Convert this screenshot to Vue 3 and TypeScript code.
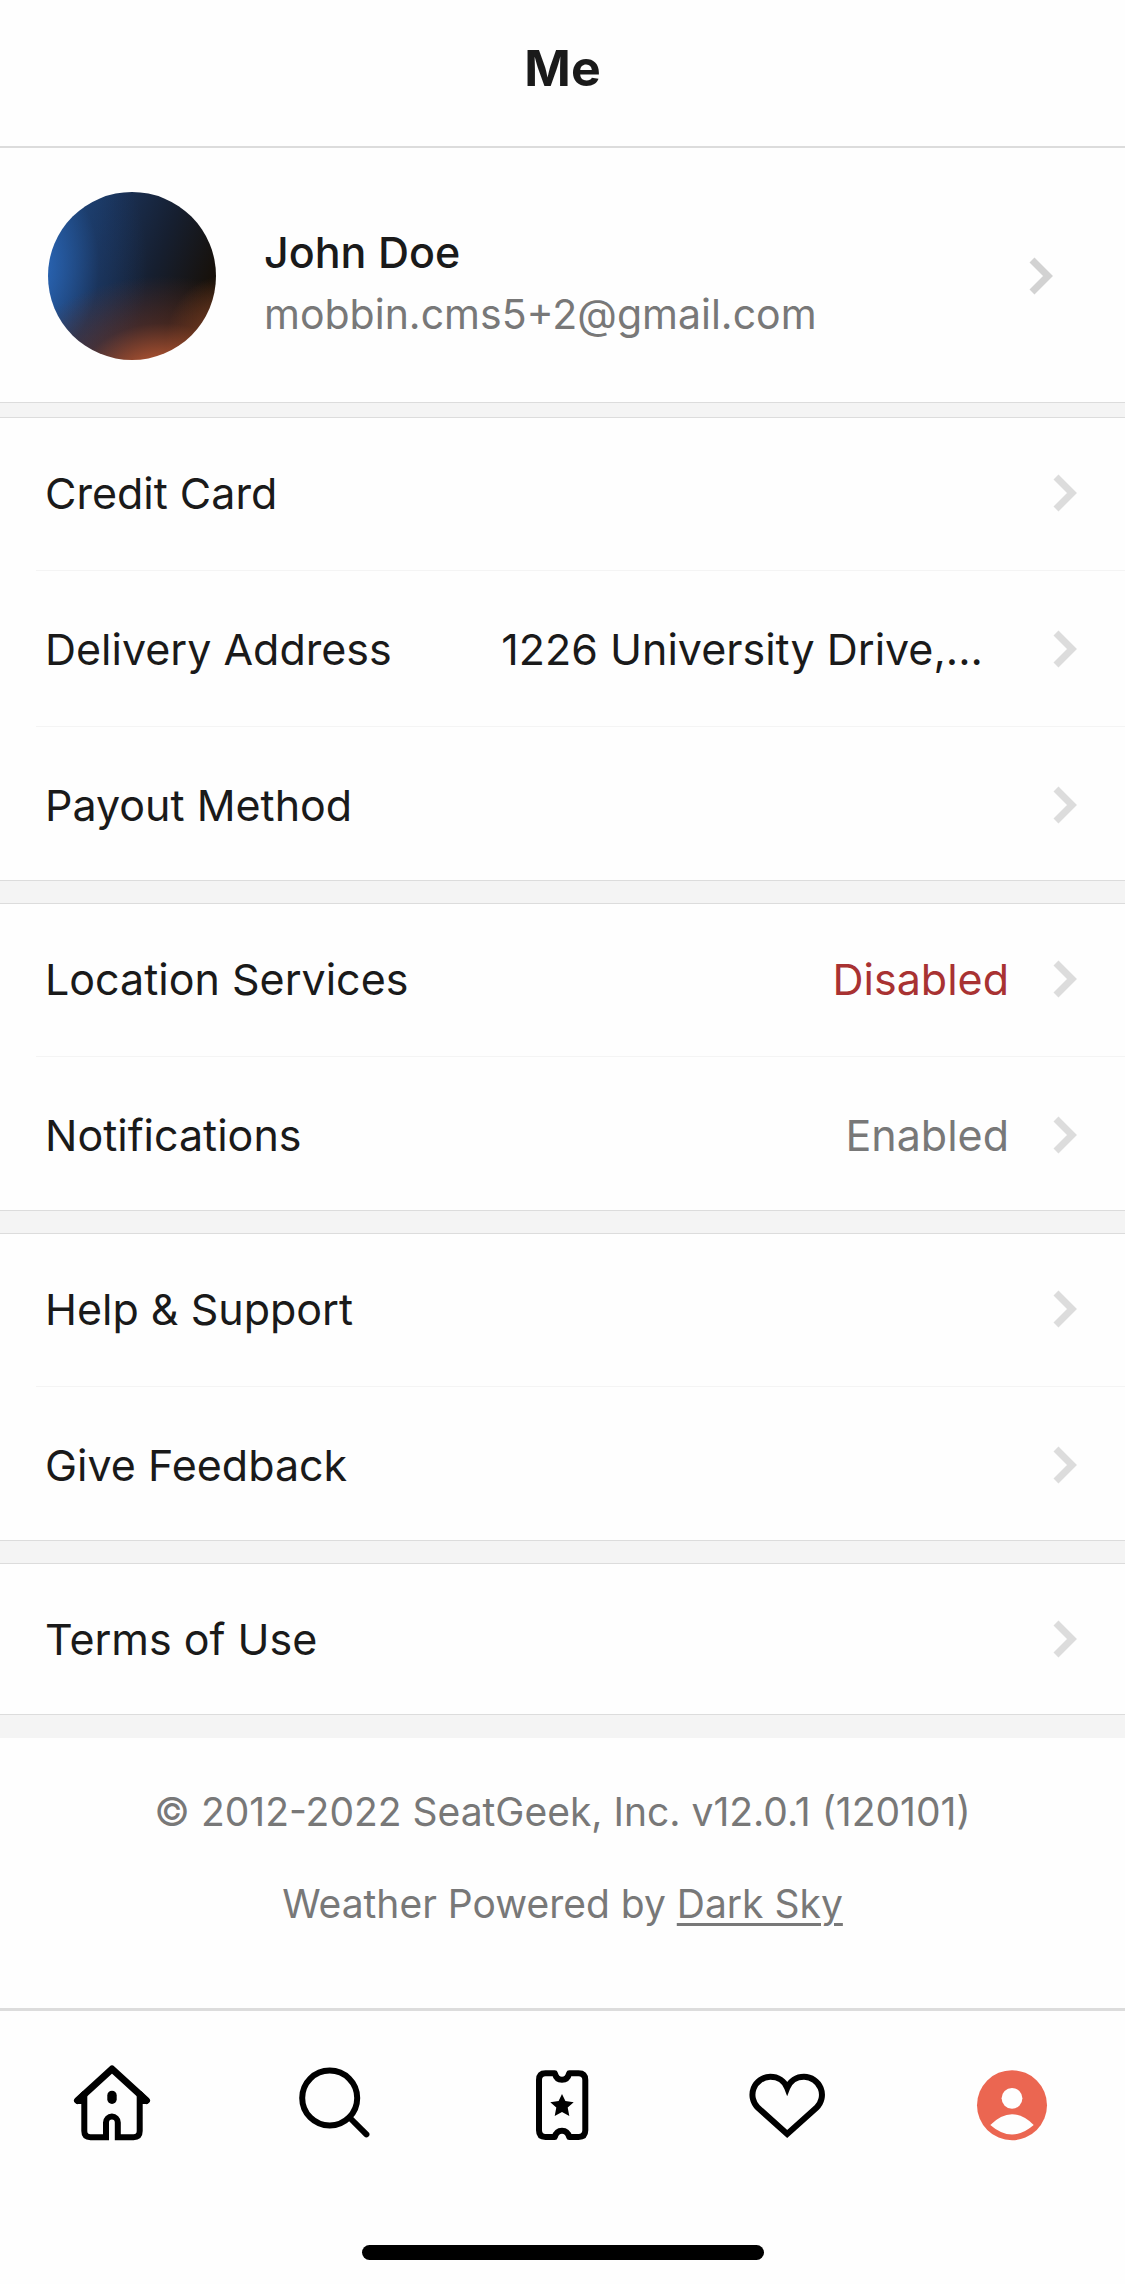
<script setup lang="ts">
import { ref } from 'vue'

type Tone = 'plain' | 'alert' | 'muted'

interface Row {
  label: string
  value?: string
  tone?: Tone
}

const groups: Row[][] = [
  [
    { label: 'Credit Card' },
    { label: 'Delivery Address', value: '1226 University Drive,...', tone: 'plain' },
    { label: 'Payout Method' },
  ],
  [
    { label: 'Location Services', value: 'Disabled', tone: 'alert' },
    { label: 'Notifications', value: 'Enabled', tone: 'muted' },
  ],
  [{ label: 'Help & Support' }, { label: 'Give Feedback' }],
  [{ label: 'Terms of Use' }],
]

const tabs = ['Home', 'Search', 'Tickets', 'Favorites', 'Me'] as const
const activeTab = ref<(typeof tabs)[number]>('Me')
</script>

<template>
  <div class="screen">
    <header class="header">
      <h1 class="title">Me</h1>
    </header>

    <main>
      <button type="button" class="profile">
        <span class="avatar"></span>
        <span class="identity">
          <span class="name">John Doe</span>
          <span class="email">mobbin.cms5+2@gmail.com</span>
        </span>
        <svg class="chevron" viewBox="0 0 24 38" aria-hidden="true">
          <path d="M3 3 L19 19 L3 35" />
        </svg>
      </button>

      <div class="groups">
        <section v-for="(rows, i) in groups" :key="i" class="group">
          <ul class="list">
            <li v-for="row in rows" :key="row.label" class="item">
              <button type="button" class="row">
                <span class="label">{{ row.label }}</span>
                <span v-if="row.value" class="value" :class="row.tone">{{ row.value }}</span>
                <svg class="chevron" viewBox="0 0 24 38" aria-hidden="true">
                  <path d="M3 3 L19 19 L3 35" />
                </svg>
              </button>
            </li>
          </ul>
        </section>
      </div>

      <footer class="about">
        <p>© 2012-2022 SeatGeek, Inc. v12.0.1 (120101)</p>
        <p>Weather Powered by <a href="#dark-sky">Dark Sky</a></p>
      </footer>
    </main>

    <nav class="tabs">
      <button
        v-for="tab in tabs"
        :key="tab"
        type="button"
        class="tab"
        :aria-label="tab"
        :aria-current="activeTab === tab ? 'page' : undefined"
        @click="activeTab = tab"
      >
        <svg class="icon" viewBox="0 0 81 81" aria-hidden="true">
          <g v-if="tab === 'Home'">
            <path d="M5.5 36.5 L40 5 L74.5 36.5" stroke-width="7" />
            <path d="M6 37 H12 V30 Z M74 37 H68 V30 Z" />
            <path class="butt" d="M12.3 31 V67 Q12.3 73.2 18.5 73.2 H34 V58.5 A5.9 5.9 0 0 1 45.8 58.5 V73.2 H61.5 Q67.7 73.2 67.7 67 V31" />
            <rect class="solid" x="35.3" y="26.7" width="9.4" height="13.3" rx="4.7" />
          </g>
          <g v-else-if="tab === 'Search'">
            <circle cx="32.7" cy="34" r="27.5" />
            <path d="M53 54 L69.4 70.4" />
          </g>
          <g v-else-if="tab === 'Tickets'">
            <path
              d="M23.5 9.3 H32.8 C33.8 13.5 36.2 15.8 40 15.8 C43.8 15.8 46.2 13.5 47.2 9.3 H56.5 Q63.3 9.3 63.3 16 V66.3 Q63.3 73 56.5 73 H47.2 C46.2 69 43.8 66.7 40 66.7 C36.2 66.7 33.8 69 32.8 73 H23.5 Q17 73 17 66.3 V16 Q17 9.3 23.5 9.3 Z"
            />
            <path
              class="solid"
              d="M40 30 L43.4 37.1 L51.7 38.2 L45.7 43.6 L47.3 52 L40 48 L32.7 52 L34.3 43.6 L28.3 38.2 L36.6 37.1 Z"
            />
          </g>
          <g v-else-if="tab === 'Favorites'">
            <path
              class="mitered"
              d="M40.2 70 L11 43.8 A18 18 0 0 1 23.3 12.8 C31 12.8 37.5 17 40.2 24 C43 17 49.5 12.8 57 12.8 A18 18 0 0 1 69.4 43.8 Z"
            />
          </g>
          <g v-else>
            <circle class="badge" cx="40" cy="41.2" r="35" />
            <circle class="cutout" cx="40" cy="34.3" r="10.4" />
            <path class="cutout" d="M18.3 61 Q40 39.5 61.7 61 Q40 80 18.3 61 Z" />
          </g>
        </svg>
      </button>
    </nav>
    <div class="home-indicator"></div>
  </div>
</template>

<style>
body {
  margin: 0;
  background: #fff;
}
</style>

<style scoped>
.screen {
  display: flex;
  flex-direction: column;
  min-height: 100vh;
  box-sizing: border-box;
  padding-bottom: 24px;
  background: #fefefe;
  color: #1a1a1a;
  font-family: Inter, 'Liberation Sans', sans-serif;
  font-size: 43px;
  line-height: 56px;
}

main {
  flex: 1;
}

button {
  margin: 0;
  padding: 0;
  border: 0;
  background: none;
  color: inherit;
  font: inherit;
  text-align: left;
  cursor: pointer;
}

.header {
  padding: 40px 48px 50px;
  border-bottom: 2px solid #dcdcdc;
}

.title {
  margin: 0;
  font-size: 50px;
  font-weight: 700;
  line-height: 56px;
  text-align: center;
}

.profile {
  display: flex;
  align-items: center;
  gap: 48px;
  width: 100%;
  padding: 44px 72px 42px 48px;
}

.avatar {
  flex: none;
  width: 168px;
  height: 168px;
  border-radius: 50%;
  background:
    radial-gradient(ellipse 90% 64% at 68% 114%, #c9683e 0%, rgba(176, 84, 50, 0.9) 24%, rgba(112, 54, 38, 0.5) 56%, rgba(60, 30, 24, 0) 100%),
    radial-gradient(ellipse 34% 40% at 104% 90%, rgba(176, 92, 40, 0.7) 0%, rgba(90, 46, 22, 0) 100%),
    radial-gradient(ellipse 75% 100% at -16% 44%, #2f72cc 0%, rgba(40, 98, 176, 0.8) 28%, rgba(28, 66, 120, 0.35) 62%, rgba(24, 36, 60, 0) 100%),
    linear-gradient(112deg, #1f477c 6%, #1a3054 32%, #161f30 58%, #17110b 84%);
}

.identity {
  display: flex;
  flex: 1;
  flex-direction: column;
  gap: 6px;
  min-width: 0;
  padding-top: 14px;
}

.name {
  font-weight: 500;
}

.email {
  color: #787878;
  font-size: 41px;
}

.chevron {
  flex: none;
  width: 24px;
  height: 38px;
  fill: none;
  stroke: #dcdcdc;
  stroke-width: 7px;
}

.profile .chevron {
  stroke: #d2d2d2;
}

.groups {
  display: flex;
  flex-direction: column;
  gap: 22px;
  padding: 14px 0 23px;
  border-top: 1px solid #dcdcdc;
  background: #f4f4f4;
}

.group {
  overflow: hidden;
  border-top: 1px solid #dcdcdc;
  border-bottom: 1px solid #dcdcdc;
  background: #fefefe;
}

.list {
  margin: -3px 0;
  padding: 0 0 0 36px;
  list-style: none;
}

.item {
  border-bottom: 1px solid #f4f4f4;
}

.row {
  display: flex;
  align-items: center;
  width: 100%;
  height: 155px;
  padding: 0 48px 0 9px;
}

.label {
  flex: 1;
  white-space: nowrap;
}

.value {
  margin-right: 44px;
  white-space: nowrap;
}

.value.plain {
  margin-right: 70px;
}

.value.alert {
  color: #a83232;
}

.value.muted {
  color: #787878;
}

.about {
  display: flex;
  flex-direction: column;
  gap: 44px;
  padding: 50px 48px 80px;
  color: #787878;
  font-size: 39px;
  line-height: 48px;
  text-align: center;
}

.about p {
  margin: 0;
}

.about a {
  color: inherit;
  text-decoration-thickness: 3px;
  text-underline-offset: 5px;
}

.tabs {
  display: flex;
  border-top: 3px solid #dcdcdc;
  padding: 53px 0 100px;
}

.tab {
  display: flex;
  flex: 1;
  justify-content: center;
}

.icon {
  width: 81px;
  height: 81px;
  fill: none;
  stroke: #000;
  stroke-width: 6px;
  stroke-linecap: round;
  stroke-linejoin: round;
}

.icon .solid {
  fill: #000;
  stroke: none;
}

.icon .butt {
  stroke-linejoin: miter;
}

.icon .mitered {
  stroke-linejoin: miter;
}

.icon .badge {
  fill: #eb6651;
  stroke: none;
}

.icon .cutout {
  fill: #fefefe;
  stroke: none;
}

.home-indicator {
  align-self: center;
  width: 402px;
  height: 15px;
  border-radius: 8px;
  background: #000;
}
</style>
